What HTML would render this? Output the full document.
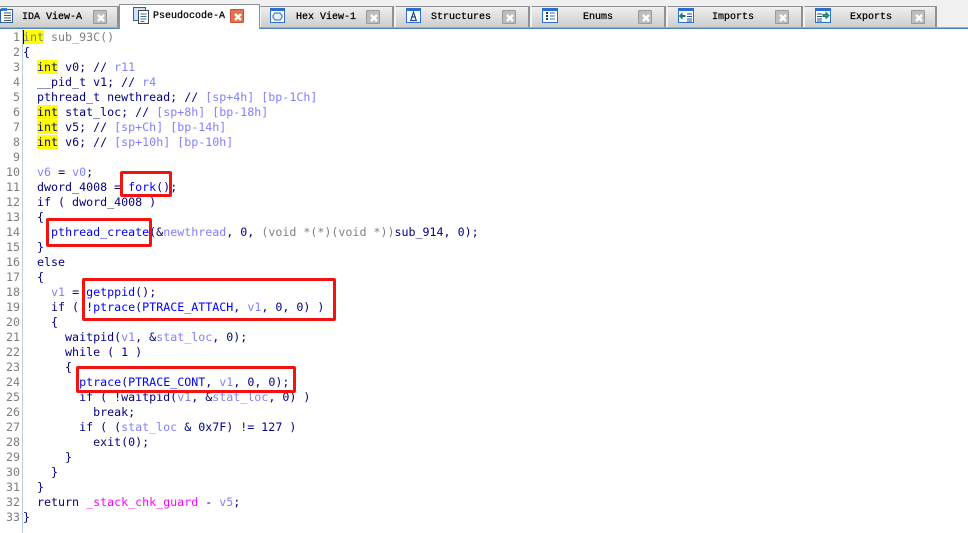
<!DOCTYPE html>
<html><head><meta charset="utf-8">
<style>
html,body{margin:0;padding:0;background:#fff;width:968px;height:533px;overflow:hidden}
#top{position:absolute;left:0;top:0;width:968px;height:27px;background:#f0f0f0}
#rule0{position:absolute;left:0;top:27px;width:968px;height:1px;background:#a8a8a8}
#rule{position:absolute;left:0;top:28px;width:968px;height:1px;background:#4f86b8}
.tab{position:absolute;top:6px;height:21px;box-sizing:border-box;border-top:1px solid #8f8f96;border-right:2px solid #8f8f96;border-left:1px solid #f4f4f4;background:linear-gradient(#efefef,#cdcdcd)}
.tab.act{top:4px;height:25px;background:#fff;border:1px solid #8f8f96;border-bottom:none;z-index:3}
.lbl{position:absolute;top:18px;transform:translateY(-50%);font:10px/12px "Liberation Mono",monospace;color:#000;z-index:4;white-space:pre;-webkit-text-stroke:.25px #000}
.x{position:absolute;top:10px;width:14px;height:14px;box-sizing:border-box;background:#bdbdbd;border:1px solid #9a9a9a;border-radius:1px;z-index:4}
.x svg{position:absolute;left:2px;top:2px}
.x.on{background:#e6704c;border-color:#c9503a}
.ic{position:absolute;z-index:4}
#gutter{position:absolute;left:22px;top:29px;width:1px;height:504px;background:#b9cfe6}
.n,.l{position:absolute;height:15px;font:11.65px/15px "DejaVu Sans Mono","Liberation Mono",monospace;white-space:pre}
.n{left:0;width:20px;text-align:right;color:#7d7d7d}
.l{left:23px;color:#000080}
.k{background:#ffff00}
.g{color:#808080}
.c{color:#8080ff}
.f{color:#0000ff}
.m{color:#ff00ff}
.r{position:absolute;box-sizing:border-box;border:3px solid #f0130f;border-radius:2px;z-index:6}
#cursor{position:absolute;left:23px;top:30px;width:1px;height:14px;background:#000;z-index:5}
</style></head><body>
<div id="top"></div><div id="rule0"></div><div id="rule"></div>

<div class="tab" style="left:-1px;width:120px"></div>
<div class="tab act" style="left:119px;width:141px"></div>
<div class="tab" style="left:260px;width:134px"></div>
<div class="tab" style="left:395px;width:135px"></div>
<div class="tab" style="left:531px;width:135px"></div>
<div class="tab" style="left:667px;width:136px"></div>
<div class="tab" style="left:804px;width:133px"></div>

<svg class="ic" style="left:0;top:8px" width="14" height="16"><rect x=".5" y="1.500" width="12" height="13" fill="#fff" stroke="#2b5fa8"/><path d="M4 5h7M4 7.500h7M4 10h7M4 12.500h7" stroke="#456"/><rect x="1" y="0" width="6" height="3" fill="#2e7fd6"/></svg>
<div class="lbl" style="left:22px">IDA View-A</div>
<div class="x" style="left:93px"><svg width="10" height="10"><path d="M2 2l6 6M8 2l-6 6" stroke="#fff" stroke-width="2.400"/></svg></div>

<svg class="ic" style="left:133px;top:7px" width="16" height="17"><rect x=".5" y=".5" width="12" height="13" fill="#cfe4fa" stroke="#1f63c0"/><rect x="5.500" y="3.500" width="10" height="13" fill="#fff" stroke="#445"/><path d="M7.500 7h6M7.500 9.500h6M7.500 12h6M7.500 14.500h4" stroke="#3c6a9c"/></svg>
<div class="lbl" style="left:153px;top:17px">Pseudocode-A</div>
<div class="x on" style="left:230px;top:9px"><svg width="10" height="10"><path d="M2 2l6 6M8 2l-6 6" stroke="#fff" stroke-width="2.400"/></svg></div>

<svg class="ic" style="left:270px;top:8px" width="15" height="15"><rect x=".5" y=".5" width="14" height="14" fill="#fff" stroke="#2a6fd0"/><rect x="1" y="1" width="13" height="2" fill="#2a6fd0"/><path d="M5 5h5l2 2.500v2l-2 2.500h-5l-2-2.500v-2z" fill="#e8f1ff" stroke="#2c5ea8"/></svg>
<div class="lbl" style="left:296px">Hex View-1</div>
<div class="x" style="left:366px"><svg width="10" height="10"><path d="M2 2l6 6M8 2l-6 6" stroke="#fff" stroke-width="2.400"/></svg></div>

<svg class="ic" style="left:406px;top:8px" width="15" height="15"><rect x=".5" y=".5" width="14" height="14" fill="#fff" stroke="#2a6fd0"/><rect x="1" y="1" width="13" height="2" fill="#2a6fd0"/><path d="M5 12l2.500-8 2.500 8M5 9h5M4 12.500h7" fill="none" stroke="#234f8c" stroke-width="1.200"/></svg>
<div class="lbl" style="left:431px">Structures</div>
<div class="x" style="left:502px"><svg width="10" height="10"><path d="M2 2l6 6M8 2l-6 6" stroke="#fff" stroke-width="2.400"/></svg></div>

<svg class="ic" style="left:542px;top:8px" width="16" height="15"><rect x=".5" y=".5" width="15" height="14" fill="#fff" stroke="#2a6fd0"/><rect x="1" y="1" width="14" height="2" fill="#2a6fd0"/><path d="M4 5h2M4 8h2M4 11h2" stroke="#123a80" stroke-width="2"/><path d="M8 5h5M8 8h5M8 11h5" stroke="#4472b0"/></svg>
<div class="lbl" style="left:583px">Enums</div>
<div class="x" style="left:638px"><svg width="10" height="10"><path d="M2 2l6 6M8 2l-6 6" stroke="#fff" stroke-width="2.400"/></svg></div>

<svg class="ic" style="left:678px;top:8px" width="16" height="15"><rect x=".5" y=".5" width="15" height="14" fill="#fff" stroke="#2a6fd0"/><rect x="1" y="1" width="14" height="2" fill="#2a6fd0"/><path d="M9 6h5M9 8.500h5M9 11h5M9 13h5" stroke="#234f8c"/><path d="M7 7.500H4V5.500L1.500 8 4 10.500V8.500h3z" fill="#2fb82f" stroke="#176"/></svg>
<div class="lbl" style="left:712px">Imports</div>
<div class="x" style="left:775px"><svg width="10" height="10"><path d="M2 2l6 6M8 2l-6 6" stroke="#fff" stroke-width="2.400"/></svg></div>

<svg class="ic" style="left:815px;top:8px" width="16" height="15"><rect x=".5" y=".5" width="15" height="14" fill="#fff" stroke="#2a6fd0"/><rect x="1" y="1" width="14" height="2" fill="#2a6fd0"/><path d="M2 6h5M2 8.500h5M2 11h5M2 13h5" stroke="#234f8c"/><path d="M8 6.500h3V4.500L14 7.500 11 10.500V8.500H8z" fill="#2fb82f" stroke="#176"/></svg>
<div class="lbl" style="left:850px">Exports</div>
<div class="x" style="left:911px"><svg width="10" height="10"><path d="M2 2l6 6M8 2l-6 6" stroke="#fff" stroke-width="2.400"/></svg></div>

<div id="gutter"></div><div id="cursor"></div>

<div class="n" style="top:30px">1</div><div class="l" style="top:30px"><span class="k g">int</span><span class="g"> sub_93C()</span></div>
<div class="n" style="top:45px">2</div><div class="l" style="top:45px">{</div>
<div class="n" style="top:60px">3</div><div class="l" style="top:60px">  <span class="k">int</span> v0; // <span class="c">r11</span></div>
<div class="n" style="top:75px">4</div><div class="l" style="top:75px">  __pid_t v1; // <span class="c">r4</span></div>
<div class="n" style="top:90px">5</div><div class="l" style="top:90px">  pthread_t newthread; // <span class="c">[sp+4h] [bp-1Ch]</span></div>
<div class="n" style="top:105px">6</div><div class="l" style="top:105px">  <span class="k">int</span> stat_loc; // <span class="c">[sp+8h] [bp-18h]</span></div>
<div class="n" style="top:120px">7</div><div class="l" style="top:120px">  <span class="k">int</span> v5; // <span class="c">[sp+Ch] [bp-14h]</span></div>
<div class="n" style="top:135px">8</div><div class="l" style="top:135px">  <span class="k">int</span> v6; // <span class="c">[sp+10h] [bp-10h]</span></div>
<div class="n" style="top:150px">9</div>
<div class="n" style="top:165px">10</div><div class="l" style="top:165px">  <span class="c">v6</span> = <span class="c">v0</span>;</div>
<div class="n" style="top:180px">11</div><div class="l" style="top:180px">  dword_4008 = <span class="f">fork</span>();</div>
<div class="n" style="top:195px">12</div><div class="l" style="top:195px">  if ( dword_4008 )</div>
<div class="n" style="top:210px">13</div><div class="l" style="top:210px">  {</div>
<div class="n" style="top:225px">14</div><div class="l" style="top:225px">    <span class="f">pthread_create</span>(&amp;<span class="c">newthread</span>, 0, <span class="g">(void *(*)(void *))</span>sub_914, 0);</div>
<div class="n" style="top:240px">15</div><div class="l" style="top:240px">  }</div>
<div class="n" style="top:255px">16</div><div class="l" style="top:255px">  else</div>
<div class="n" style="top:270px">17</div><div class="l" style="top:270px">  {</div>
<div class="n" style="top:285px">18</div><div class="l" style="top:285px">    <span class="c">v1</span> = <span class="f">getppid</span>();</div>
<div class="n" style="top:300px">19</div><div class="l" style="top:300px">    if ( !<span class="f">ptrace</span>(<span class="f">PTRACE_ATTACH</span>, <span class="c">v1</span>, 0, 0) )</div>
<div class="n" style="top:315px">20</div><div class="l" style="top:315px">    {</div>
<div class="n" style="top:330px">21</div><div class="l" style="top:330px">      waitpid(<span class="c">v1</span>, &amp;<span class="c">stat_loc</span>, 0);</div>
<div class="n" style="top:345px">22</div><div class="l" style="top:345px">      while ( 1 )</div>
<div class="n" style="top:360px">23</div><div class="l" style="top:360px">      {</div>
<div class="n" style="top:375px">24</div><div class="l" style="top:375px">        <span class="f">ptrace</span>(<span class="f">PTRACE_CONT</span>, <span class="c">v1</span>, 0, 0);</div>
<div class="n" style="top:390px">25</div><div class="l" style="top:390px">        if ( !waitpid(<span class="c">v1</span>, &amp;<span class="c">stat_loc</span>, 0) )</div>
<div class="n" style="top:405px">26</div><div class="l" style="top:405px">          break;</div>
<div class="n" style="top:420px">27</div><div class="l" style="top:420px">        if ( (<span class="c">stat_loc</span> &amp; 0x7F) != 127 )</div>
<div class="n" style="top:435px">28</div><div class="l" style="top:435px">          exit(0);</div>
<div class="n" style="top:450px">29</div><div class="l" style="top:450px">      }</div>
<div class="n" style="top:465px">30</div><div class="l" style="top:465px">    }</div>
<div class="n" style="top:480px">31</div><div class="l" style="top:480px">  }</div>
<div class="n" style="top:495px">32</div><div class="l" style="top:495px">  return <span class="m">_stack_chk_guard</span> - <span class="c">v5</span>;</div>
<div class="n" style="top:510px">33</div><div class="l" style="top:510px">}</div>

<div class="r" style="left:120px;top:171px;width:52px;height:26px"></div>
<div class="r" style="left:46px;top:218px;width:106px;height:29px"></div>
<div class="r" style="left:82px;top:278px;width:254px;height:43px"></div>
<div class="r" style="left:76px;top:366px;width:220px;height:27px"></div>
</body></html>
